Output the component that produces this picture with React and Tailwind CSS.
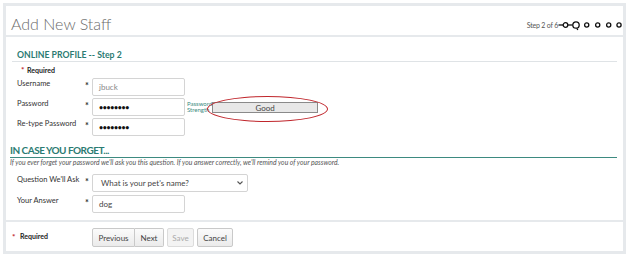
export default function App() {
  const inputCls =
    "h-[18px] border border-[#d4d4d4] rounded-[2px] bg-white flex items-center pl-[6px] text-[8px] leading-[10px]";
  const dotsCls =
    "h-[18px] w-[93px] border border-[#d4d4d4] rounded-[2px] bg-white flex items-center pl-[6px] text-[7px] leading-[10px] text-[#111] font-bold tracking-[-0.3px]";
  const star = <div className="w-[7px] pt-[3px] text-[9px] leading-[10px] font-bold text-[#333]">*</div>;
  const label = "w-[68px] text-[7.5px] leading-[10px] pt-[1px] text-[#333]";
  const btn =
    "h-[19px] border border-[#c9c9c9] bg-gradient-to-b from-[#fbfbfb] to-[#ebebeb] flex items-center justify-center text-[8px] text-[#444]";
  return (
    <div className="w-[629px] h-[259px] bg-white pt-[3px] pl-[3px] font-['Lato',sans-serif]">
      <div className="w-[623px] h-[251px] border-[3px] border-[#e6e9ec] flex flex-col">
        {/* header */}
        <div className="h-[31px] border-b-2 border-[#e6e9ec] flex justify-between items-start shrink-0">
          <div className="pl-[5px] pt-[8px] text-[16px] leading-[20px] font-light text-[#6b6b6b]">
            Add New Staff
          </div>
          <div className="flex items-center pt-[13px] pr-[1px]">
            <span className="text-[7px] leading-[10px] text-[#555] tracking-[-0.2px]">Step 2 of 6</span>
            <svg width="64" height="12" viewBox="0 0 64 12" className="block">
              <g fill="none" stroke="#111" strokeWidth="1.3">
                <line x1="0.5" y1="6" x2="5" y2="6" />
                <circle cx="7.5" cy="6" r="2.3" />
                <line x1="9.8" y1="6" x2="14.6" y2="6" />
                <circle cx="18" cy="6" r="3.2" />
                <path d="M18.8 9.2 L19.8 11" />
                <circle cx="28.7" cy="6" r="2.1" />
                <circle cx="39.7" cy="6" r="2.1" />
                <circle cx="50.7" cy="6" r="2.1" />
                <circle cx="61" cy="6" r="2.1" />
              </g>
            </svg>
          </div>
        </div>

        {/* section 1 */}
        <div className="mx-[6px] mt-[12px]">
          <div className="h-[13px] pl-[5px] border-b border-[#dfe3e6] text-[8.7px] leading-[12px] font-bold text-[#2b7b72]">
            ONLINE PROFILE -- Step 2
          </div>
          <div className="mt-[3px] pl-[9px] flex items-center h-[10px]">
            <span className="text-[8px] font-bold text-[#c0262c] w-[6px]">*</span>
            <span className="text-[7px] font-bold text-[#222]">Required</span>
          </div>
          <div className="mt-[3px] flex flex-col gap-[2px] pl-[5px]">
            <div className="flex items-start h-[18px]">
              <div className={label}>Username</div>
              {star}
              <div className={inputCls + " w-[93px] text-[#888]"}>jbuck</div>
            </div>
            <div className="flex items-start h-[18px] relative">
              <div className={label}>Password</div>
              {star}
              <div className={dotsCls}>••••••••</div>
              <div className="ml-[2px] pt-[3px] text-[6px] leading-[6px] text-[#3c8c82]">
                Password
                <br />
                Strength
              </div>
              <div className="mt-[4px] w-[106px] h-[11px] bg-[#e8e8e8] border border-[#8a8a8a] flex items-center justify-center text-[8px] text-[#444]">
                Good
              </div>
              <div className="absolute left-[190px] top-[-2px] w-[121px] h-[26px] rounded-[50%] border border-[#c0262c]"></div>
            </div>
            <div className="flex items-start h-[18px]">
              <div className={label}>Re-type Password</div>
              {star}
              <div className={dotsCls}>••••••••</div>
            </div>
          </div>
        </div>

        {/* section 2 */}
        <div className="ml-[4px] mr-[6px] mt-[8px]">
          <div className="h-[14px] border-b-[1.5px] border-[#3d8a80] text-[10px] leading-[12px] font-bold text-[#2b7b72] tracking-[-0.5px]">
            IN CASE YOU FORGET...
          </div>
          <div className="text-[6.8px] leading-[9px] italic text-[#555]">
            If you ever forget your password we'll ask you this question. If you answer correctly, we'll remind you of your
            password.
          </div>
          <div className="mt-[7px] flex flex-col gap-[3px] pl-[7px]">
            <div className="flex items-start h-[18px]">
              <div className={label}>Question We'll Ask</div>
              {star}
              <div className="w-[156px] h-[18px] border border-[#d4d4d4] rounded-[2px] flex items-center justify-between pl-[8px] pr-[4px] text-[8px] text-[#444]">
                <span>What is your pet's name?</span>
                <svg width="6" height="4" viewBox="0 0 6 4">
                  <path d="M0.5 0.5 L3 3 L5.5 0.5" fill="none" stroke="#555" strokeWidth="1.1" />
                </svg>
              </div>
            </div>
            <div className="flex items-start h-[18px]">
              <div className={label}>Your Answer</div>
              {star}
              <div className={inputCls + " w-[93px] text-[#444]"}>dog</div>
            </div>
          </div>
        </div>

        {/* footer */}
        <div className="mt-[7px] border-t-2 border-[#e6e9ec] flex-1 flex items-start pt-[6px]">
          <div className="w-[86px] pl-[6px] pt-[7px] flex items-center h-[10px]">
            <span className="text-[8px] font-bold text-[#c0262c] w-[8px]">*</span>
            <span className="text-[7px] font-bold text-[#222]">Required</span>
          </div>
          <div className="flex">
            <div className={btn + " w-[43px] rounded-l-[2px]"}>Previous</div>
            <div className={btn + " w-[29px] border-l-0 rounded-r-[2px]"}>Next</div>
            <div className="ml-[3px] w-[27px] h-[19px] border border-[#dcdcdc] rounded-[2px] bg-[#f3f3f3] flex items-center justify-center text-[8px] text-[#aaa]">
              Save
            </div>
            <div className={btn + " ml-[3px] w-[36px] rounded-[2px]"}>Cancel</div>
          </div>
        </div>
      </div>
    </div>
  );
}
